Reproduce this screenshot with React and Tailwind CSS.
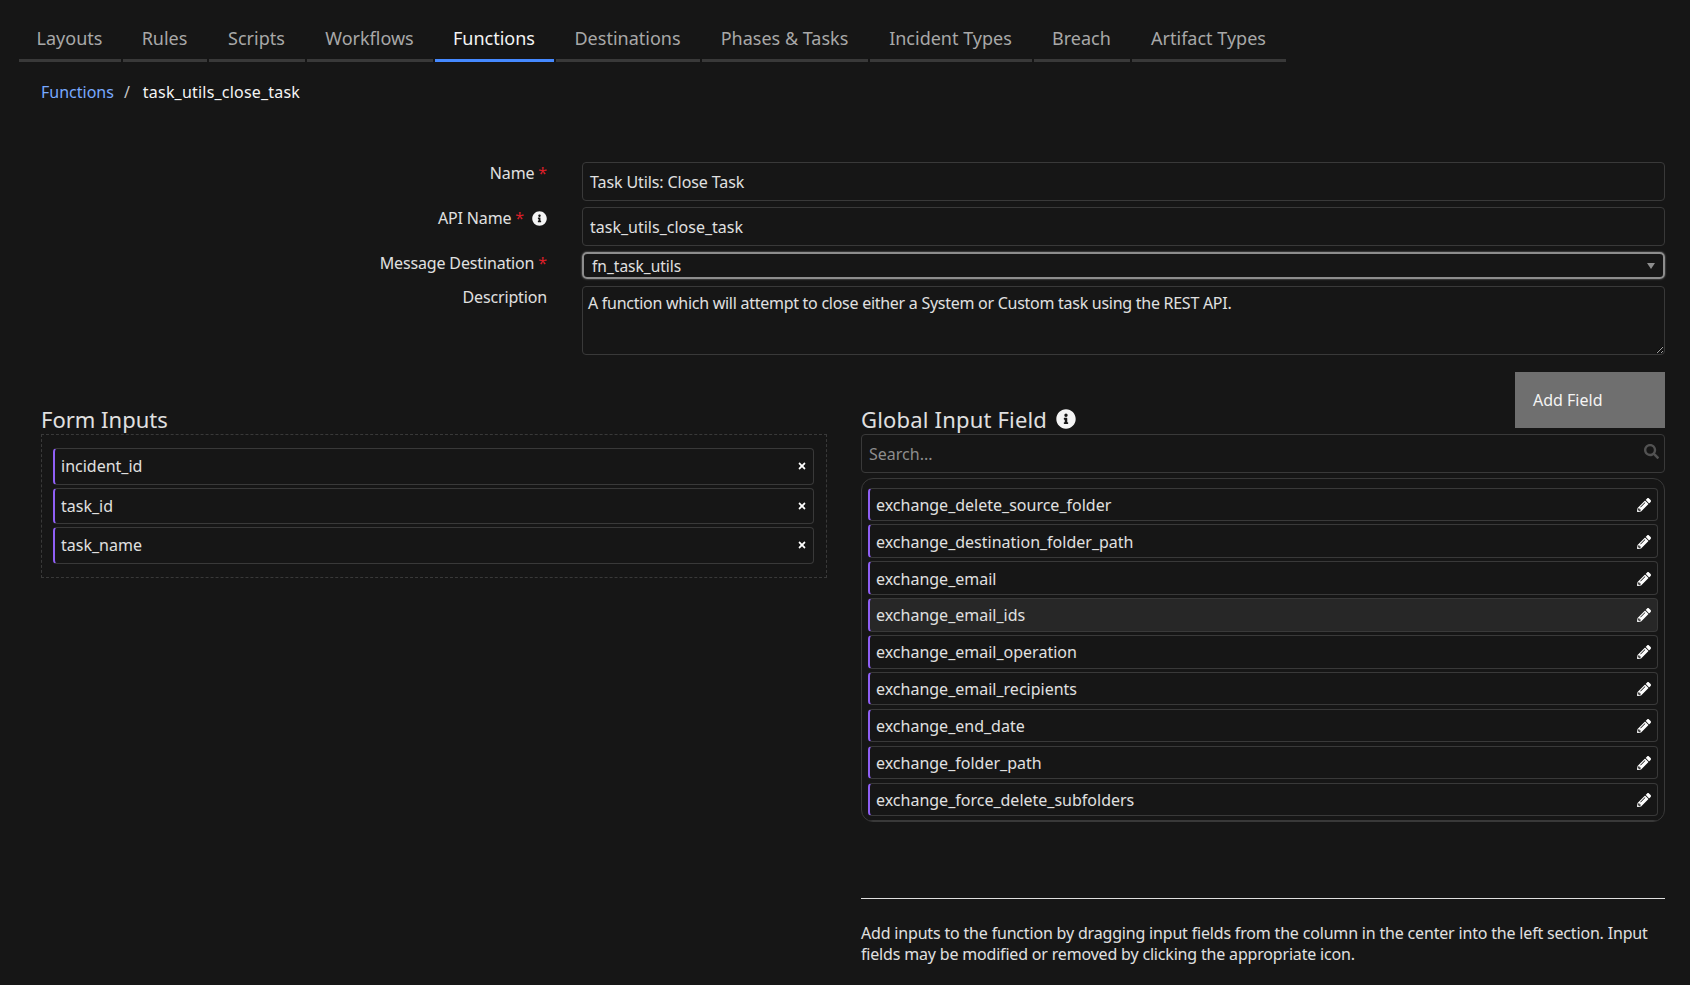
import { FaInfoCircle, FaPencilAlt, FaSearch, FaTimes } from "react-icons/fa";

const tabs = [
  { label: "Layouts", width: "w-[102px]" },
  { label: "Rules", width: "w-[84px]" },
  { label: "Scripts", width: "w-[96px]" },
  { label: "Workflows", width: "w-[126px]" },
  { label: "Functions", width: "w-[119px]", active: true },
  { label: "Destinations", width: "w-[144px]" },
  { label: "Phases & Tasks", width: "w-[166px]" },
  { label: "Incident Types", width: "w-[162px]" },
  { label: "Breach", width: "w-[96px]" },
  { label: "Artifact Types", width: "w-[154px]" },
];

const formInputs = ["incident_id", "task_id", "task_name"];

const globalInputs = [
  "exchange_delete_source_folder",
  "exchange_destination_folder_path",
  "exchange_email",
  "exchange_email_ids",
  "exchange_email_operation",
  "exchange_email_recipients",
  "exchange_end_date",
  "exchange_folder_path",
  "exchange_force_delete_subfolders",
];

function Required() {
  return <span className="ml-[4px] text-[#da1e28]">*</span>;
}

function FieldRow({ label, children, labelClass = "" }) {
  return (
    <div className="flex gap-[35px]">
      <div className={`w-[528px] shrink-0 text-right tracking-[-0.15px] text-[#e0e0e0] ${labelClass}`}>{label}</div>
      <div className="min-w-0 flex-1">{children}</div>
    </div>
  );
}

export default function App() {
  return (
    <div className="h-[985px] overflow-hidden bg-[#161616] pl-[19px] pr-[25px] font-['Noto_Sans',sans-serif] text-[16px] leading-[22px] text-[#e0e0e0]">
      <nav className="flex gap-[2px] pt-[24px]">
        {tabs.map((tab) => (
          <div
            key={tab.label}
            className={`h-[38px] border-b-[3px] pr-[1px] text-center text-[18px] leading-[28px] ${tab.width} ${
              tab.active ? "border-[#4589ff] text-[#f4f4f4]" : "border-[#393939] text-[#a8a8a8]"
            }`}
          >
            {tab.label}
          </div>
        ))}
      </nav>

      <div className="ml-[22px] mt-[19px] flex">
        <a className="text-[#78a9ff]">Functions</a>
        <span className="ml-[10px] text-[#c6c6c6]">/</span>
        <span className="ml-[13px] tracking-[0.2px] text-[#f4f4f4]">task_utils_close_task</span>
      </div>

      <div className="mt-[59px] flex flex-col">
        <FieldRow
          label={
            <>
              Name
              <Required />
            </>
          }
        >
          <div className="flex h-[39px] items-center rounded-[4px] border border-[#393939] pl-[7px] tracking-[-0.1px] text-[#e0e0e0]">
            Task Utils: Close Task
          </div>
        </FieldRow>
        <div className="mt-[6px]">
          <FieldRow
            label={
              <span className="inline-flex items-center">
                API Name
                <Required />
                <FaInfoCircle className="ml-[8px] text-[15px] text-[#f4f4f4]" />
              </span>
            }
          >
            <div className="flex h-[39px] items-center rounded-[4px] border border-[#393939] pl-[7px] text-[#e0e0e0]">
              task_utils_close_task
            </div>
          </FieldRow>
        </div>
        <div className="mt-[6px]">
          <FieldRow
            label={
              <>
                Message Destination
                <Required />
              </>
            }
          >
            <div className="flex h-[27px] items-center justify-between rounded-[5px] border-2 border-[#8d8d8d] pl-[8px] pr-[8px] text-[15.5px] text-[#e0e0e0] shadow-[0_0_2px_#8d8d8d]">
              fn_task_utils
              <span className="h-0 w-0 border-x-[4px] border-t-[6px] border-x-transparent border-t-[#8d8d8d]" />
            </div>
          </FieldRow>
        </div>
        <div className="mt-[7px]">
          <FieldRow label="Description">
            <textarea
              readOnly
              defaultValue="A function which will attempt to close either a System or Custom task using the REST API."
              className="block h-[69px] w-full rounded-[4px] border border-[#393939] bg-transparent px-[5px] py-[5px] tracking-[-0.27px] text-[#e0e0e0] outline-none"
            />
          </FieldRow>
        </div>
      </div>

      <div className="ml-[22px] mt-[17px] flex gap-[34px]">
        <section className="w-[786px] shrink-0">
          <h2 className="mt-[32px] h-[30px] text-[22px] leading-[30px] text-[#e0e0e0]">Form Inputs</h2>
          <div className="flex flex-col gap-[3px] border border-dashed border-[#393939] pb-[13px] pl-[11px] pr-[12px] pt-[13px]">
            {formInputs.map((name) => (
              <div
                key={name}
                className="flex h-[36.5px] items-center justify-between rounded-[4px] border border-[#393939] border-l-2 border-l-[#8f5ff5] pl-[6px] pr-[6px]"
              >
                {name}
                <FaTimes className="text-[10px] text-white" />
              </div>
            ))}
          </div>
        </section>

        <section className="min-w-0 flex-1">
          <div className="flex h-[62px] justify-between">
            <h2 className="flex items-center gap-[9px] self-end text-[22px] leading-[30px] tracking-[0.18px] text-[#e0e0e0]">
              Global Input Field
              <FaInfoCircle className="text-[20px] text-[#f4f4f4]" />
            </h2>
            <button className="h-[56px] w-[150px] bg-[#6f6f6f] pl-[18px] text-left text-[#f4f4f4]">Add Field</button>
          </div>
          <div className="flex h-[39px] items-center justify-between rounded-[4px] border border-[#393939] pl-[7px] pr-[5px] text-[#8d8d8d]">
            Search...
            <FaSearch className="mb-[5px] text-[15px] text-[#525252]" />
          </div>
          <div className="mt-[5px] flex h-[344px] flex-col gap-[3.4px] overflow-hidden rounded-[12px] border border-[#393939] pl-[6px] pr-[6px] pt-[8.5px]">
            {globalInputs.map((name) => (
              <div
                key={name}
                className={`flex h-[33.5px] shrink-0 items-center justify-between rounded-[4px] border border-[#393939] border-l-2 border-l-[#8f5ff5] pl-[6px] pr-[6px] pt-[1px] ${
                  name === "exchange_email_ids" ? "bg-[#272727]" : ""
                }`}
              >
                {name}
                <FaPencilAlt className="text-[14px] text-white" />
              </div>
            ))}
            <div className="h-[33px] shrink-0 rounded-[4px] border border-[#393939] border-l-2 border-l-[#8f5ff5]" />
          </div>
          <div className="mt-[76px] border-t border-[#e0e0e0] pt-[24px] leading-[21px] tracking-[-0.18px] text-[#e0e0e0]">
            Add inputs to the function by dragging input fields from the column in the center into the left section. Input fields may be modified or removed by clicking the appropriate icon.
          </div>
        </section>
      </div>
    </div>
  );
}
